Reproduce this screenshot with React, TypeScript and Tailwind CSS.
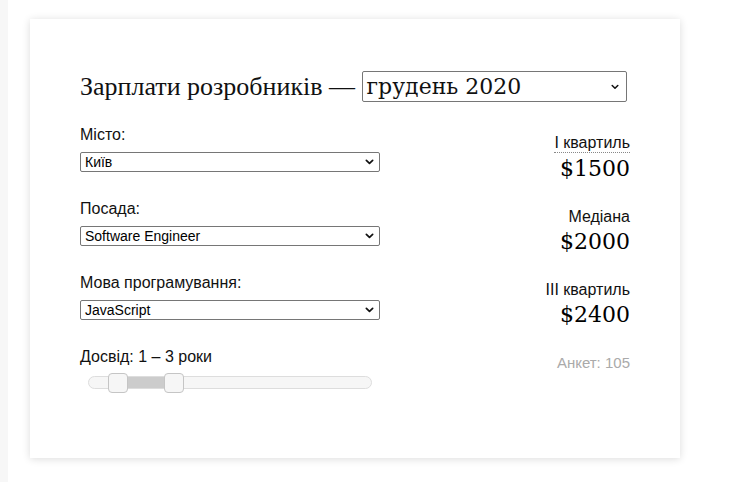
import React from "react";

const Chevron = ({ className }: { className?: string }) => (
  <svg viewBox="0 0 10 6" className={className} fill="none" stroke="#111" strokeWidth="1.9" strokeLinecap="round" strokeLinejoin="round">
    <path d="M1.5 1.2 L5 4.6 L8.5 1.2" />
  </svg>
);

const SmallSelect = ({ value }: { value: string }) => (
  <div className="relative flex h-[20px] w-[300px] items-center rounded-[2px] border border-[#767676] bg-white pl-[4px] text-[14px] leading-none text-black">
    <span>{value}</span>
    <Chevron className="absolute right-[5px] top-[6px] h-[6px] w-[9px]" />
  </div>
);

const Field = ({ label, value }: { label: string; value: string }) => (
  <div className="flex flex-col">
    <div className="h-[18px] text-[16px] leading-[18px] text-[#111]">{label}</div>
    <div className="mt-[8px]">
      <SmallSelect value={value} />
    </div>
  </div>
);

const Stat = ({ label, value, abbr }: { label: string; value: string; abbr?: boolean }) => (
  <div className="flex flex-col items-end">
    <div className={"text-[16px] leading-[18px] text-[#111] " + (abbr ? "border-b border-dotted border-[#888]" : "")}>{label}</div>
    <div className="mt-[3px] text-[22px] leading-[26px] text-black [font-family:'DejaVu_Serif','Liberation_Serif',serif]">{value}</div>
  </div>
);

export default function App() {
  return (
    <div className="flex min-h-[482px] bg-white [font-family:'Liberation_Sans',Arial,sans-serif]">
      <div className="w-[8px] shrink-0 bg-[#f7f7f7]" />
      <div className="pl-[22px] pt-[19px]">
        <div className="h-[439px] w-[650px] bg-white px-[50px] pt-[52px] shadow-[0_1px_8px_rgba(0,0,0,0.14)]">
          <div className="flex items-center text-[26px] leading-[30px] text-[#111] [font-family:'Liberation_Serif',serif]">
            <span className="whitespace-pre">Зарплати розробників — </span>
            <div className="relative flex h-[31px] w-[265px] items-center rounded-[2px] border border-[#767676] bg-white pl-[4px] text-[22px] [font-family:'DejaVu_Serif','Liberation_Serif',serif]">
              <span>грудень 2020</span>
              <Chevron className="absolute right-[7px] top-[12px] h-[6px] w-[8px]" />
            </div>
          </div>
          <div className="mt-[24px] flex justify-between">
            <div className="flex w-[300px] flex-col gap-[28px]">
              <Field label="Місто:" value="Київ" />
              <Field label="Посада:" value="Software Engineer" />
              <Field label="Мова програмування:" value="JavaScript" />
              <div className="flex flex-col">
                <div className="h-[18px] text-[16px] leading-[18px] text-[#111]">Досвід: 1 – 3 роки</div>
                <div className="relative ml-[8px] mt-[10px] h-[13px] w-[284px] rounded-full border border-[#dddddd] bg-[#f6f6f6]">
                  <div className="absolute left-[38px] top-0 h-[11px] w-[38px] bg-[#cccccc]" />
                  <div className="absolute left-[19px] top-[-4px] h-[20px] w-[20px] rounded-[4px] border border-[#c5c5c5] bg-[#f6f6f6]" />
                  <div className="absolute left-[75px] top-[-4px] h-[20px] w-[20px] rounded-[4px] border border-[#c5c5c5] bg-[#f6f6f6]" />
                </div>
              </div>
            </div>
            <div className="flex flex-col items-end pt-[8px]">
              <div className="flex flex-col gap-[26px]">
                <Stat label="І квартиль" value="$1500" abbr />
                <Stat label="Медіана" value="$2000" />
                <Stat label="ІІІ квартиль" value="$2400" />
              </div>
              <div className="mt-[26px] text-[15px] leading-[18px] text-[#aaaaaa]">Анкет: 105</div>
            </div>
          </div>
        </div>
      </div>
    </div>
  );
}
